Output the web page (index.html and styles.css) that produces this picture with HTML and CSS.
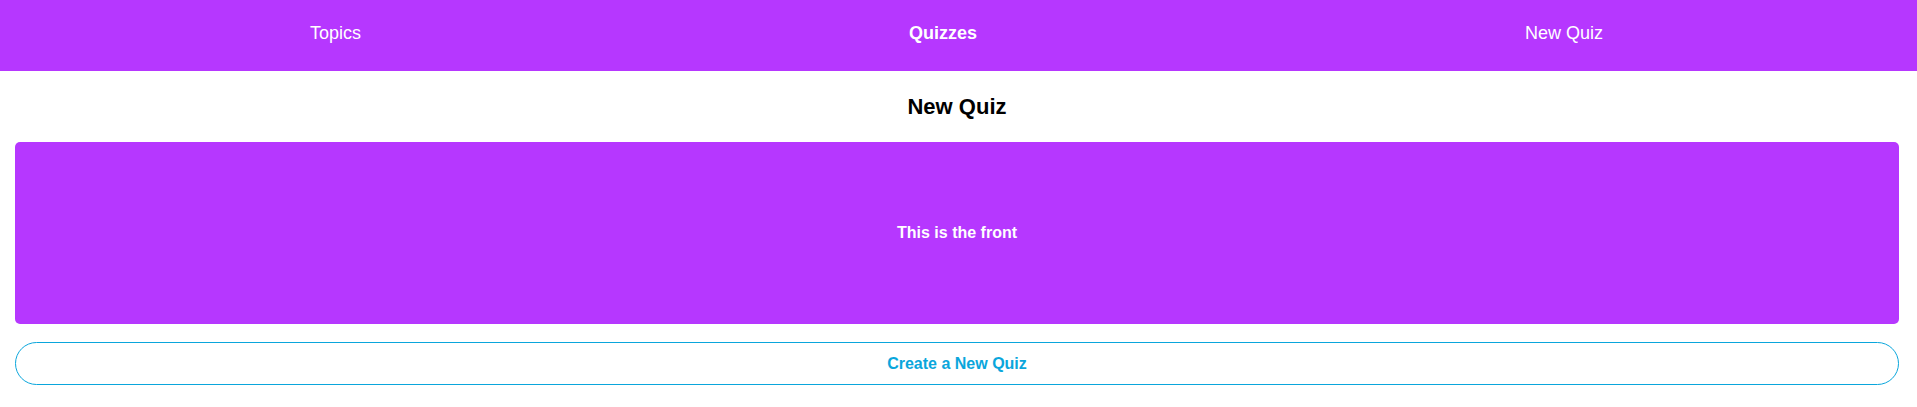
FILE: index.html
```html
<!DOCTYPE html>
<html lang="en">
<head>
<meta charset="utf-8">
<title>New Quiz</title>
<link rel="stylesheet" href="styles.css">
</head>
<body>
  <nav class="nav">
    <a class="nav-link" href="#">Topics</a>
    <a class="nav-link nav-link-active" href="#">Quizzes</a>
    <a class="nav-link" href="#">New Quiz</a>
  </nav>
  <main class="main">
    <h2 class="title">New Quiz</h2>
    <div class="card">
      <span class="card-text">This is the front</span>
    </div>
    <button class="create-btn" type="button">Create a New Quiz</button>
  </main>
</body>
</html>
```

FILE: styles.css
```css
* {
  box-sizing: border-box;
}

body {
  margin: 0;
  font-family: "Liberation Sans", Arial, sans-serif;
  background: #ffffff;
  color: #000000;
}

.nav {
  height: 71px;
  background: #b637ff;
  display: flex;
  justify-content: space-around;
  align-items: flex-start;
  padding: 23px 40px 0 36px;
}

.nav-link {
  color: #ffffff;
  text-decoration: none;
  font-size: 18px;
  line-height: 21px;
}

.nav-link-active {
  font-weight: bold;
}

.main {
  padding: 0 18px 0 15px;
  display: flex;
  flex-direction: column;
}

.title {
  margin: 23px 0 23px;
  font-size: 22px;
  line-height: 25px;
  font-weight: bold;
  text-align: center;
  color: #000000;
}

.card {
  height: 182px;
  background: #b637ff;
  border-radius: 5px;
  display: flex;
  align-items: center;
  justify-content: center;
}

.card-text {
  color: #ffffff;
  font-weight: bold;
  font-size: 16px;
}

.create-btn {
  margin-top: 18px;
  height: 43px;
  border: 1px solid #0aa6dc;
  border-radius: 999px;
  background: #ffffff;
  color: #0aa6dc;
  font-family: "Liberation Sans", Arial, sans-serif;
  font-weight: bold;
  font-size: 16px;
  cursor: pointer;
}
```
